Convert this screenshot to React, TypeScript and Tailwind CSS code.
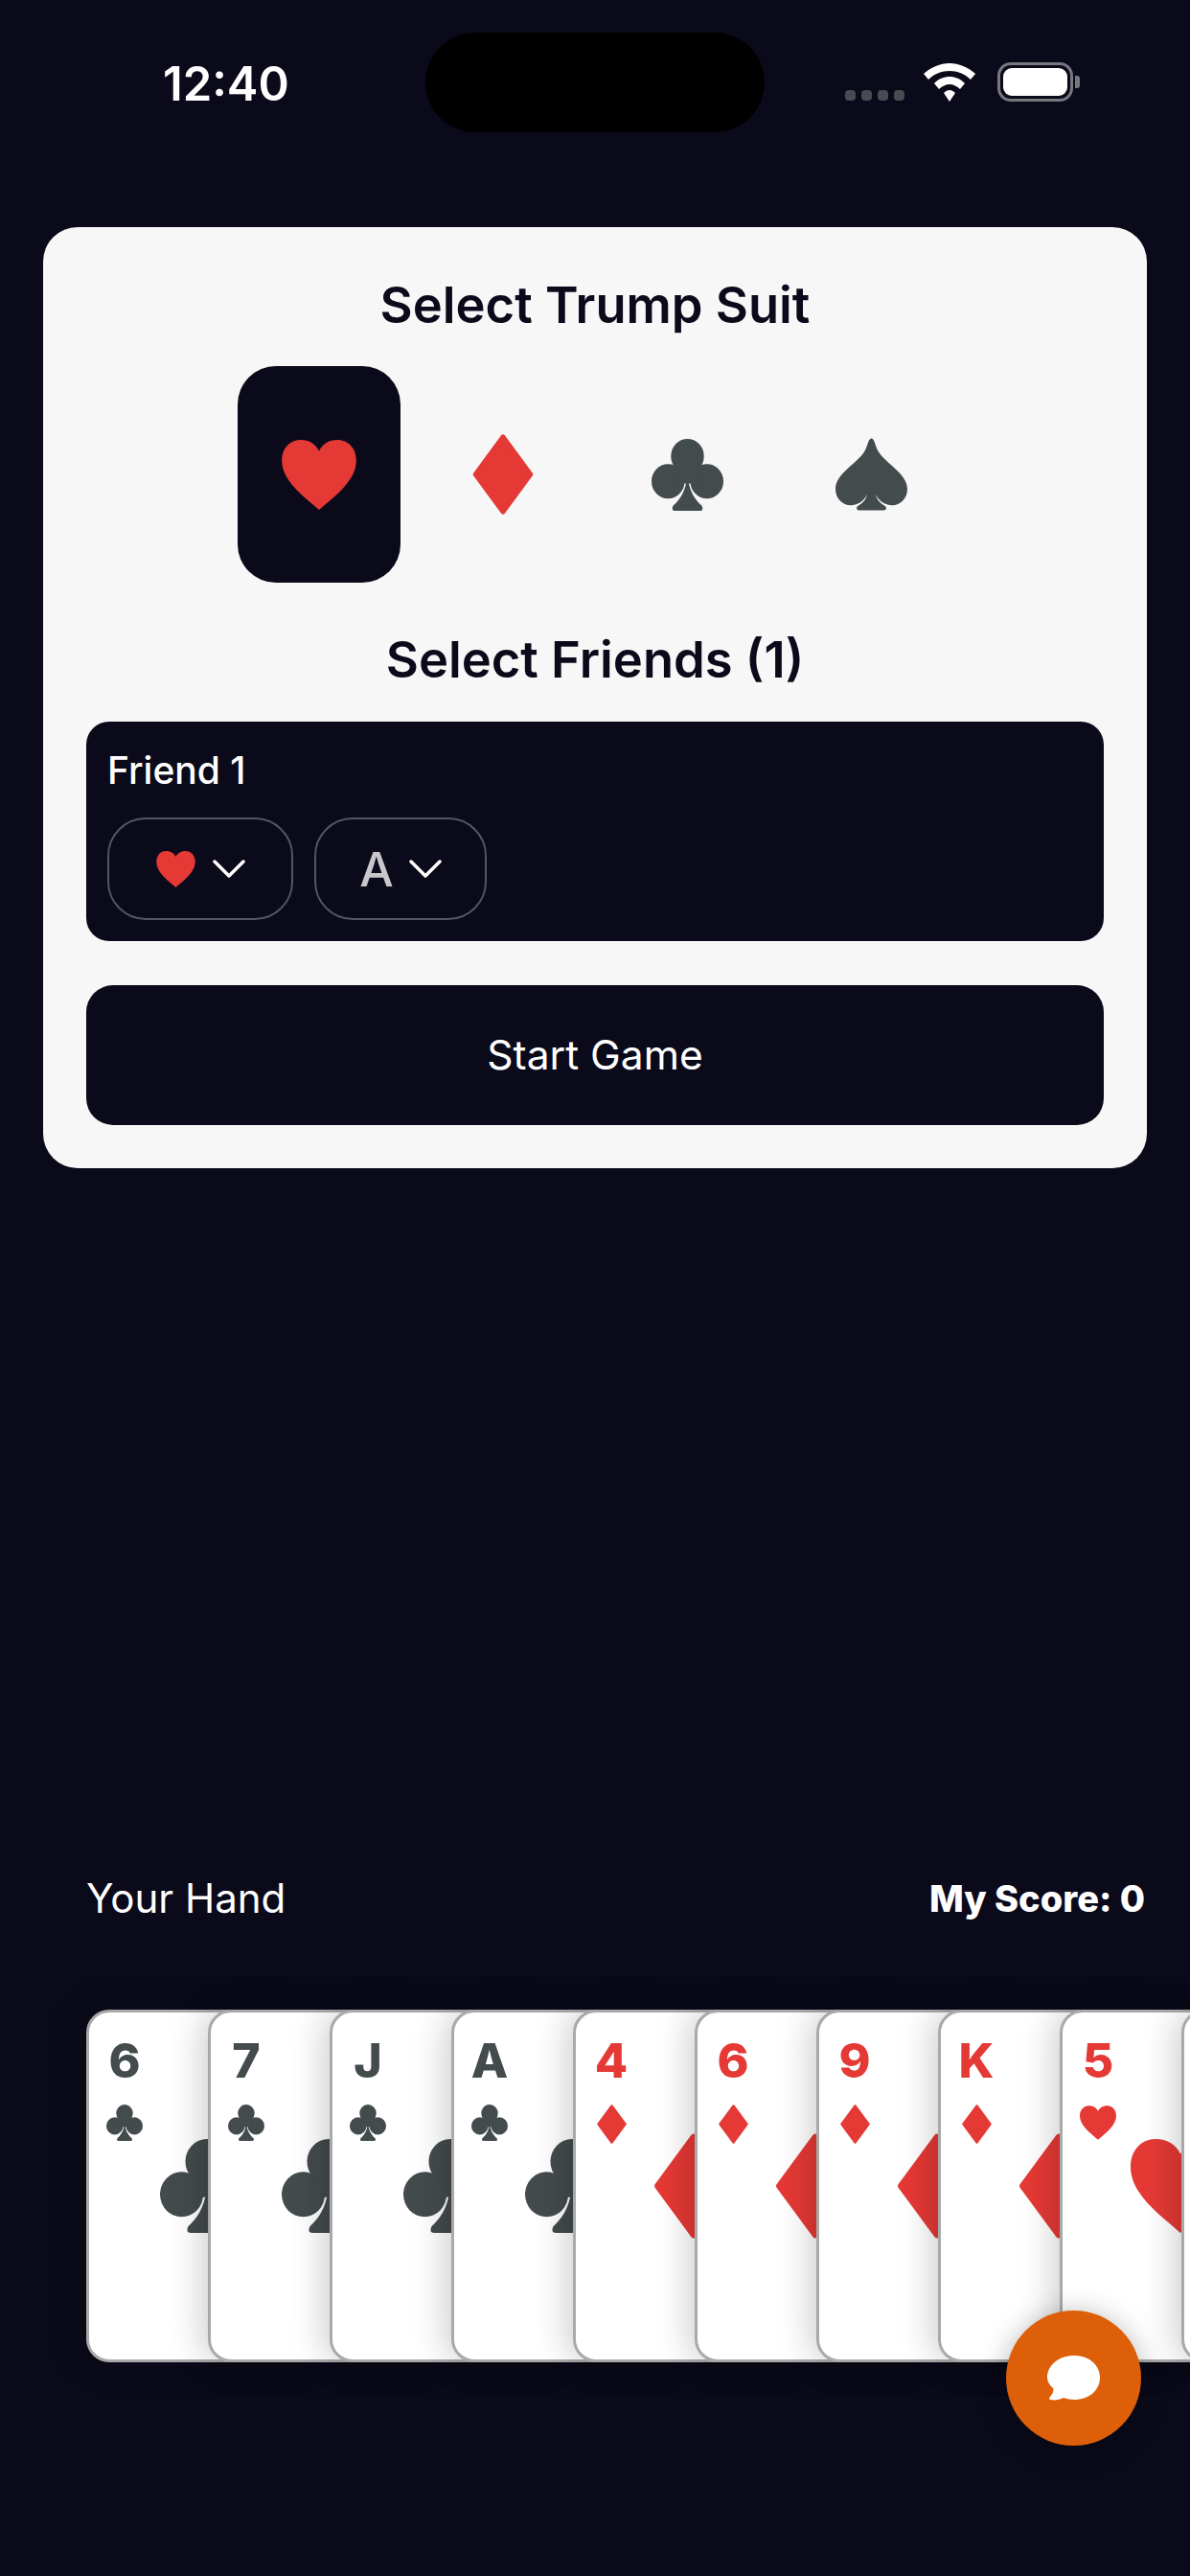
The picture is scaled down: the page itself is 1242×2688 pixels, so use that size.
import React from "react";

type Suit = "heart" | "diamond" | "club" | "spade";

const HAND: { rank: string; suit: Suit }[] = [
  { rank: "6", suit: "club" },
  { rank: "7", suit: "club" },
  { rank: "J", suit: "club" },
  { rank: "A", suit: "club" },
  { rank: "4", suit: "diamond" },
  { rank: "6", suit: "diamond" },
  { rank: "9", suit: "diamond" },
  { rank: "K", suit: "diamond" },
  { rank: "5", suit: "heart" },
  // only the left edge of this card is on screen
  { rank: "", suit: "heart" },
];

function SuitIcon({ suit, className }: { suit: Suit; className: string }) {
  if (suit === "heart") {
    return (
      <svg viewBox="0 0 100 94" className={className} fill="#e53935">
        <path d="M50 94C32 78 0 56 0 28C0 11 11 0 25 0C37 0 46 6 50 15C54 6 63 0 75 0C89 0 100 11 100 28C100 56 68 78 50 94Z" />
      </svg>
    );
  }
  if (suit === "diamond") {
    return (
      <svg viewBox="0 0 62 82" className={className} fill="#e53935" stroke="#e53935" strokeWidth="5" strokeLinejoin="round">
        <path d="M31 3L59 41L31 79L3 41Z" />
      </svg>
    );
  }
  if (suit === "club") {
    return (
      <svg viewBox="0 0 100 100" className={className} fill="#444b4d">
        <ellipse cx="50" cy="24" rx="23" ry="24" />
        <ellipse cx="23" cy="59" rx="23" ry="24" />
        <ellipse cx="77" cy="59" rx="23" ry="24" />
        <path d="M38 40H62L68 62H32Z" />
        <path d="M50 50C52 72 60 84 70 93Q73 100 67 100H33Q27 100 30 93C40 84 48 72 50 50Z" />
      </svg>
    );
  }
  return (
    <svg viewBox="0 0 100 100" className={className} fill="#444b4d">
      <path d="M50 0C54 0 55 9 58 15C66 33 100 48 100 70C100 84 90 93 79 93C68 93 60 86 56 78C58 88 66 92 70 95Q72 100 67 100H33Q28 100 30 95C34 92 42 88 44 78C40 86 32 93 21 93C10 93 0 84 0 70C0 48 34 33 42 15C45 9 46 0 50 0Z" />
    </svg>
  );
}

function Chevron() {
  return (
    <svg viewBox="0 0 34 20" className="h-[20px] w-[34px]" fill="none" stroke="#ffffff" strokeWidth="3.5" strokeLinecap="round" strokeLinejoin="round">
      <path d="M2 2L17 17L32 2" />
    </svg>
  );
}

function StatusBar() {
  return (
    <div className="flex h-[237px] items-start pl-[170px] pt-[34px]">
      <span className="mt-[26px] w-[274px] text-[49px] leading-[56px] font-semibold text-white [font-family:Inter,sans-serif]">12:40</span>
      <div className="h-[104px] w-[354px] rounded-[52px] bg-black" />
      <div className="ml-[84px] mt-[31px] flex items-end">
        <div className="mb-[1px] flex gap-[6px]">
          <div className="h-[11px] w-[11px] rounded-[4px] bg-[#4a4a52]" />
          <div className="h-[11px] w-[11px] rounded-[4px] bg-[#4a4a52]" />
          <div className="h-[11px] w-[11px] rounded-[4px] bg-[#4a4a52]" />
          <div className="h-[11px] w-[11px] rounded-[4px] bg-[#4a4a52]" />
        </div>
        <svg viewBox="0 0 54 40" className="ml-[20px] h-[40px] w-[54px]" fill="#ffffff">
          <path d="M27 0C37 0 46 4 54 11L49 17C43 11 35 8 27 8C19 8 11 11 5 17L0 11C8 4 17 0 27 0Z" />
          <path d="M27 14C33 14 38 16 43 21L38 27C35 24 31 22 27 22C23 22 19 24 16 27L11 21C16 16 21 14 27 14Z" />
          <path d="M27 28C29 28 31 29 33 31L27 40L21 31C23 29 25 28 27 28Z" />
        </svg>
        <div className="ml-[23px] flex items-center">
          <div className="flex h-[41px] w-[79px] items-center justify-center rounded-[14px] border-[3px] border-[#77777f]">
            <div className="h-[29px] w-[67px] rounded-[9px] bg-white" />
          </div>
          <div className="ml-[2px] h-[13px] w-[5px] rounded-r-[3px] bg-[#77777f]" />
        </div>
      </div>
    </div>
  );
}

function SetupPanel() {
  return (
    <div className="mx-[45px] flex h-[982px] flex-col rounded-[36px] bg-[#f7f7f7] px-[45px] text-[#0a0a1a]">
      <h2 className="mt-[46px] text-center text-[52.5px] leading-[70px] font-semibold [font-family:Inter,sans-serif]">Select Trump Suit</h2>
      <div className="mt-[29px] flex justify-center gap-[22px]">
        <div className="flex h-[226px] w-[170px] items-center justify-center rounded-[40px] bg-[#0a0a1a]">
          <SuitIcon suit="heart" className="h-[73px] w-[78px]" />
        </div>
        <div className="flex h-[226px] w-[170px] items-center justify-center">
          <SuitIcon suit="diamond" className="h-[84px] w-[64px]" />
        </div>
        <div className="flex h-[226px] w-[170px] items-center justify-center">
          <SuitIcon suit="club" className="h-[75px] w-[75px]" />
        </div>
        <div className="flex h-[226px] w-[170px] items-center justify-center">
          <SuitIcon suit="spade" className="h-[78px] w-[75px]" />
        </div>
      </div>
      <h2 className="mt-[45px] text-center text-[52.5px] leading-[70px] font-semibold [font-family:Inter,sans-serif]">Select Friends (1)</h2>
      <div className="mt-[30px] h-[229px] rounded-[24px] bg-[#0a0a1a] px-[22px] pt-[26px]">
        <div className="text-[39px] leading-[50px] font-medium text-white [font-family:Inter,sans-serif]">Friend 1</div>
        <div className="mt-[24px] flex gap-[22px]">
          <div className="flex h-[107px] w-[194px] items-center justify-center gap-[18px] rounded-[40px] border-2 border-[#55555f]">
            <SuitIcon suit="heart" className="h-[38px] w-[41px]" />
            <Chevron />
          </div>
          <div className="flex h-[107px] w-[180px] items-center justify-center gap-[16px] rounded-[40px] border-2 border-[#55555f]">
            <span className="text-[50px] leading-[60px] font-medium text-[#c8c8cc] [font-family:Inter,sans-serif]">A</span>
            <Chevron />
          </div>
        </div>
      </div>
      <button className="mt-[46px] h-[146px] rounded-[28px] bg-[#0a0a1a] text-[42.5px] text-white [font-family:Inter,sans-serif]">Start Game</button>
    </div>
  );
}

function PlayingCard({ rank, suit, first }: { rank: string; suit: Suit; first: boolean }) {
  const red = suit === "heart" || suit === "diamond";
  const big =
    suit === "diamond" ? "h-[110px] w-[84px]" : suit === "heart" ? "h-[98px] w-[104px]" : "h-[98px] w-[98px]";
  return (
    <div
      className={`relative flex h-[368px] w-[252px] shrink-0 items-center justify-center rounded-[24px] border-[3px] border-[#a9a9a9] bg-white shadow-[-6px_0_36px_rgba(0,0,0,0.2)] ${first ? "" : "-ml-[125px]"}`}
    >
      <SuitIcon suit={suit} className={big} />
      {rank && (
        <div className="absolute left-[17px] top-[20px] flex w-[40px] flex-col items-center">
          <span className={`text-[50px] leading-[60px] font-extrabold [font-family:Inter,sans-serif] ${red ? "text-[#e53935]" : "text-[#444b4d]"}`}>
            {rank}
          </span>
          <div className="mt-[16px]">
            <SuitIcon suit={suit} className={suit === "diamond" ? "h-[41px] w-[31px]" : "h-[38px] w-[38px]"} />
          </div>
        </div>
      )}
    </div>
  );
}

export default function App() {
  return (
    <div className="relative h-[2688px] w-[1242px] overflow-hidden bg-[#0a0a1a]">
      <StatusBar />
      <SetupPanel />

      <div className="mt-[736px] flex items-center justify-between pl-[90px] pr-[47px] text-white">
        <span className="text-[42px] leading-[52px] [font-family:Inter,sans-serif]">Your Hand</span>
        <span className="text-[38px] leading-[52px] font-extrabold [font-family:Inter,sans-serif]">My Score: 0</span>
      </div>

      <div className="mt-[90px] flex pl-[90px]">
        {HAND.map((c, i) => (
          <PlayingCard key={i} rank={c.rank} suit={c.suit} first={i === 0} />
        ))}
      </div>

      <button className="absolute left-[1050px] top-[2411px] flex h-[141px] w-[141px] items-center justify-center rounded-full bg-[#dd5f09] shadow-[0_4px_30px_rgba(0,0,0,0.3)]">
        <svg viewBox="0 0 55 47" className="h-[47px] w-[55px]" fill="#ffffff">
          <path d="M28 0C44 0 55 10 55 23C55 36 44 46 28 46C24 46 20 45 17 44C13 46 8 47 3 46Q1 45 3 43C6 40 7 36 6 34C2 30 0 27 0 23C0 10 12 0 28 0Z" />
        </svg>
      </button>
    </div>
  );
}
